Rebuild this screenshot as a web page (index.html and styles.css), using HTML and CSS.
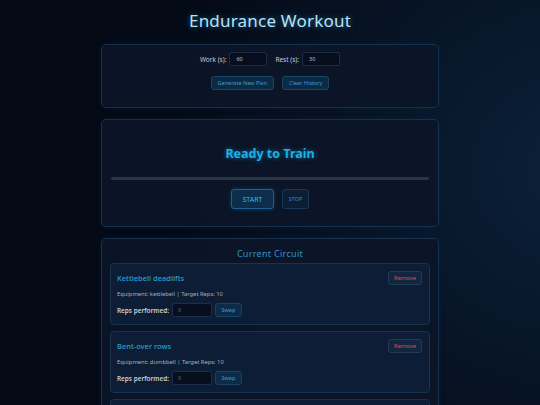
FILE: index.html
```html
<!DOCTYPE html>
<html lang="en">
<head>
<meta charset="utf-8">
<title>Endurance Workout</title>
<link rel="stylesheet" href="styles.css">
</head>
<body>
<main class="app">
  <h1 class="title">Endurance Workout</h1>

  <section class="panel settings">
    <div class="row">
      <label class="field">Work (s): <input class="num" type="text" value="60"></label>
      <label class="field">Rest (s): <input class="num" type="text" value="30"></label>
    </div>
    <div class="row">
      <button class="btn small">Generate New Plan</button>
      <button class="btn small">Clear History</button>
    </div>
  </section>

  <section class="panel timer">
    <h2 class="status">Ready to Train</h2>
    <div class="progress"><div class="fill" style="width:0%"></div></div>
    <div class="row controls">
      <button class="btn start">START</button>
      <button class="btn stop">STOP</button>
    </div>
  </section>

  <section class="panel circuit">
    <h3 class="circuit-title">Current Circuit</h3>
    <div class="card">
      <div class="card-head">
        <span class="ex-name">Kettlebell deadlifts</span>
        <button class="btn remove">Remove</button>
      </div>
      <p class="meta">Equipment: kettlebell | Target Reps: 10</p>
      <div class="reps">
        <span class="reps-label">Reps performed:</span>
        <input class="reps-input" type="text" placeholder="0">
        <button class="btn swap">Swap</button>
      </div>
    </div>
    <div class="card">
      <div class="card-head">
        <span class="ex-name">Bent-over rows</span>
        <button class="btn remove">Remove</button>
      </div>
      <p class="meta">Equipment: dumbbell | Target Reps: 10</p>
      <div class="reps">
        <span class="reps-label">Reps performed:</span>
        <input class="reps-input" type="text" placeholder="0">
        <button class="btn swap">Swap</button>
      </div>
    </div>
    <div class="card">
      <div class="card-head">
        <span class="ex-name">Jump squats</span>
        <button class="btn remove">Remove</button>
      </div>
      <p class="meta">Equipment: none | Target Reps: 10</p>
      <div class="reps">
        <span class="reps-label">Reps performed:</span>
        <input class="reps-input" type="text" placeholder="0">
        <button class="btn swap">Swap</button>
      </div>
    </div>
  </section>
</main>
</body>
</html>
```

FILE: styles.css
```css
html, body {
  margin: 0;
  padding: 0;
}
body {
  height: 405px;
  font-family: "Noto Sans", "DejaVu Sans", sans-serif;
  color: #c2cad6;
  background:
    radial-gradient(ellipse 420px 380px at 580px 170px, rgba(14, 42, 72, 0.7), rgba(14, 42, 72, 0) 100%),
    #040a16;
  overflow: hidden;
}
.app {
  width: 338px;
  margin: 0 auto;
  display: flex;
  flex-direction: column;
  gap: 11px;
}
.title {
  margin: 10px 0 1px;
  height: 22px;
  line-height: 22px;
  text-align: center;
  font-weight: 400;
  font-size: 17px;
  color: #b6e4f6;
  text-shadow: 0 0 6px rgba(60, 170, 230, 0.6);
  letter-spacing: 0.2px;
}
.panel {
  background: rgba(12, 22, 40, 0.92);
  border: 1px solid #16304c;
  border-radius: 5px;
  padding: 7px 8px 7px 8px;
  box-shadow: 0 0 6px rgba(20, 80, 140, 0.15);
}
.row {
  display: flex;
  justify-content: center;
  align-items: center;
  gap: 8px;
  margin-bottom: 10px;
}
.field {
  display: flex;
  align-items: center;
  gap: 3px;
  font-size: 6.5px;
  color: #c4ccd8;
}
.num {
  width: 38px;
  height: 14px;
  box-sizing: border-box;
  background: #070f1e;
  border: 1px solid #1a2e48;
  border-radius: 2px;
  color: #b8c0cc;
  font-family: inherit;
  font-size: 5.5px;
  padding: 0 6px;
  outline: none;
}
.btn {
  font-family: inherit;
  cursor: pointer;
  border-radius: 3px;
  box-sizing: border-box;
  padding: 0;
}
.btn.small {
  height: 14px;
  padding: 0 6px;
  font-size: 5.5px;
  background: #0d2a44;
  border: 1px solid #1a4566;
  color: #3a9dcb;
}
.timer { padding-top: 8px; }
.status {
  margin: 18px 0 0;
  line-height: 16px;
  height: 16px;
  text-align: center;
  font-size: 12.5px;
  font-weight: 700;
  color: #1cb0e8;
  text-shadow: 0 0 5px rgba(28, 176, 232, 0.55);
}
.progress {
  height: 3px;
  margin: 15px 1px 9px;
  background: #2a3546;
  border-radius: 2px;
  overflow: hidden;
}
.fill {
  height: 100%;
  background: #1cb0e8;
}
.controls { gap: 8px; }
.btn.start {
  width: 43px;
  height: 20px;
  font-size: 7px;
  background: #0c2d4b;
  border: 1px solid #1d5f8e;
  color: #3ab2e4;
  box-shadow: 0 0 4px rgba(30, 120, 190, 0.35);
}
.btn.stop {
  width: 27px;
  height: 20px;
  font-size: 5.5px;
  background: #0b1e36;
  border: 1px solid #18385a;
  color: #2f90c2;
}
.circuit {
  padding-top: 8px;
  display: flex;
  flex-direction: column;
  gap: 6px;
}
.circuit-title {
  margin: 0 0 -4px;
  height: 14px;
  line-height: 14px;
  text-align: center;
  font-size: 9px;
  font-weight: 400;
  color: #2b95c8;
  letter-spacing: 0.3px;
}
.card {
  background: #0d1d35;
  border: 1px solid #17334f;
  border-radius: 4px;
  padding: 7px 7px 7px 6px;
}
.card-head {
  display: flex;
  justify-content: space-between;
  align-items: center;
  height: 14px;
}
.ex-name {
  font-size: 7.5px;
  font-weight: 500;
  color: #27a2d4;
}
.btn.remove {
  width: 34px;
  height: 14px;
  font-size: 5.8px;
  background: #132640;
  border: 1px solid #213a58;
  color: #d0545c;
}
.meta {
  margin: 5px 0 4px;
  height: 9px;
  line-height: 9px;
  font-size: 5.8px;
  color: #a7b0be;
}
.reps {
  display: flex;
  align-items: center;
  gap: 3px;
  height: 14px;
}
.reps-label {
  font-size: 6.4px;
  font-weight: 600;
  color: #c6ced9;
}
.reps-input {
  width: 40px;
  height: 14px;
  box-sizing: border-box;
  background: #070f1e;
  border: 1px solid #1a2e48;
  border-radius: 2px;
  font-family: inherit;
  font-size: 5.5px;
  color: #b8c0cc;
  padding: 0 5px;
  outline: none;
}
.reps-input::placeholder { color: #5a6678; }
.btn.swap {
  width: 27px;
  height: 14px;
  font-size: 5.5px;
  background: #0d2a46;
  border: 1px solid #1a4262;
  color: #3aa0d0;
}
```
